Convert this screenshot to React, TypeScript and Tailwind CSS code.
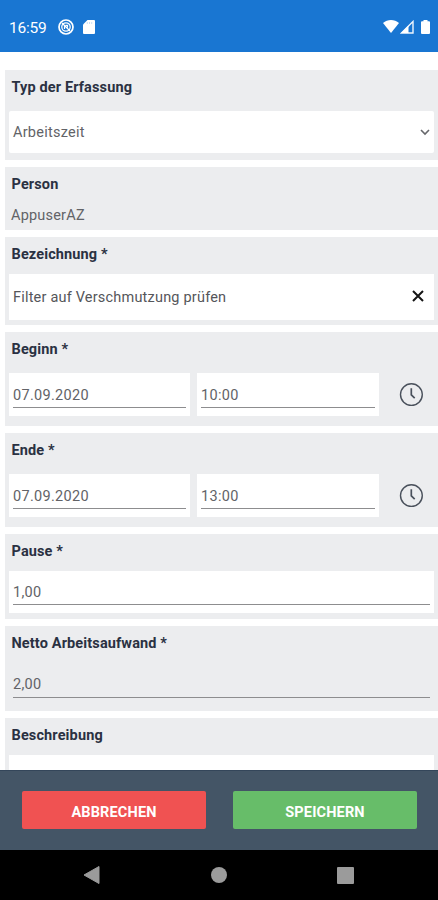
import type { ReactNode } from 'react'

function Section({ label, className, children }: { label: string; className: string; children?: ReactNode }) {
  return (
    <section className={`shrink-0 bg-[#ecedef] pl-1 pr-1 ${className}`}>
      <h2 className="h-[37px] pt-[8px] pl-[2.5px] text-[14.5px] leading-[19px] font-bold tracking-[0.13px] text-[#2a3142]">{label}</h2>
      {children}
    </section>
  )
}

function Input({ value, className }: { value: string; className: string }) {
  return (
    <div className={`px-1 ${className}`}>
      <div className="h-full border-b border-[#8d8d8f] text-[14.5px] leading-[18px] tracking-[0.3px] text-[#626367]">{value}</div>
    </div>
  )
}

function ClockIcon() {
  return (
    <svg className="ml-[20px] mt-[9px] h-6 w-6" viewBox="0 0 24 24" fill="none" stroke="#4a515c">
      <circle cx="12.4" cy="12.6" r="10.9" strokeWidth="1.4" />
      <path d="M12.3 6.2v6.6l3.400 3.400" strokeWidth="1.7" />
    </svg>
  )
}

function DateRow({ date, time }: { date: string; time: string }) {
  return (
    <div className="mt-[4px] flex">
      <Input value={date} className="h-[43px] w-[181px] bg-white pt-[14px] pb-[8px]" />
      <Input value={time} className="ml-[7px] h-[43px] w-[182px] bg-white pt-[14px] pb-[8px]" />
      <ClockIcon />
    </div>
  )
}

function StatusBar() {
  return (
    <header className="flex h-[52px] shrink-0 items-center bg-[#1976d2] pl-[9px] pr-[8px] text-white">
      <span className="mt-[3px] w-[38px] text-[15.5px] leading-5 tracking-[-0.25px]">16:59</span>
      <svg className="ml-[11px] mt-[2px] h-4 w-4" viewBox="0 0 16 16" fill="none" stroke="white">
        <circle cx="8" cy="8" r="7" strokeWidth="1.7" />
        <circle cx="8" cy="8" r="4.2" strokeWidth="1.3" />
        <path d="M4 4l8 8M6.500 10V7.200M9.500 8.500V6.300H7.500" strokeWidth="1.2" />
      </svg>
      <svg className="ml-[9px] mt-[2px] h-[14px] w-3" viewBox="0 0 12 14" fill="white">
        <path d="M4.5 0H11a1 1 0 0 1 1 1v12a1 1 0 0 1-1 1H1a1 1 0 0 1-1-1V4.5z" />
        <path d="M4.3 2v2M6.5 2v2M8.7 2v2" stroke="#b9d5f2" strokeWidth=".8" />
      </svg>
      <svg className="ml-auto mt-[1px] h-[13px] w-4" viewBox="0 0 16 13" fill="white">
        <path d="M0 3C4.5-1 11.5-1 16 3L8 13z" />
      </svg>
      <svg className="ml-[1px] mt-[2px] h-[14px] w-[14px]" viewBox="0 0 14 14" fill="none">
        <path d="M13 1.5V13H1.5z" stroke="#eef5fd" strokeWidth="1.400" />
        <path d="M8.5 5.5V13H1z" fill="white" />
      </svg>
      <svg className="ml-[7px] mt-[2px] h-[14px] w-[9px]" viewBox="0 0 9 14" fill="white">
        <path d="M2.500 0h4v1.3h1.500a1 1 0 0 1 1 1V13a1 1 0 0 1-1 1H1a1 1 0 0 1-1-1V2.300a1 1 0 0 1 1-1h1.500z" />
      </svg>
    </header>
  )
}

export default function App() {
  return (
    <div className="flex h-[900px] w-full flex-col overflow-hidden bg-white font-['Roboto','Liberation_Sans',sans-serif]">
      <StatusBar />
      <main className="flex h-[718px] shrink-0 flex-col gap-[7px] overflow-hidden pt-[18px] pl-[5px]">
        <Section label="Typ der Erfassung" className="h-[90px]">
          <div className="mt-[4px] flex h-[42px] items-center justify-between rounded-[2px] bg-white pl-1 pr-[4px] text-[14.5px] tracking-[0.25px] text-[#626367]">
            <span className="pt-[2px]">Arbeitszeit</span>
            <svg className="h-[10px] w-[10px]" viewBox="0 0 10 10" fill="none" stroke="#66676b" strokeWidth="1.6">
              <path d="M1 3l4 4 4-4" />
            </svg>
          </div>
        </Section>
        <Section label="Person" className="h-[63px]">
          <p className="pl-[2px] pt-[3px] text-[14.5px] leading-[18px] tracking-[0.2px] text-[#626367]">AppuserAZ</p>
        </Section>
        <Section label="Bezeichnung *" className="h-[88px]">
          <div className="flex h-[46px] items-center justify-between bg-white pl-1 pr-[10px] text-[14.5px] tracking-[0.2px] text-[#55565a]">
            <span className="pt-[2px]">Filter auf Verschmutzung prüfen</span>
            <svg className="-mt-[2px] h-3 w-3" viewBox="0 0 12 12" fill="none" stroke="#151515" strokeWidth="2">
              <path d="M1 1l10 10M11 1L1 11" />
            </svg>
          </div>
        </Section>
        <Section label="Beginn *" className="h-[94px]">
          <DateRow date="07.09.2020" time="10:00" />
        </Section>
        <Section label="Ende *" className="h-[94px]">
          <DateRow date="07.09.2020" time="13:00" />
        </Section>
        <Section label="Pause *" className="h-[85px]">
          <Input value="1,00" className="h-[42px] bg-white pt-[13px] pb-[8px]" />
        </Section>
        <Section label="Netto Arbeitsaufwand *" className="h-[85px]">
          <Input value="2,00" className="h-[42px] pt-[13px] pb-[7px]" />
        </Section>
        <Section label="Beschreibung" className="h-[90px]">
          <div className="h-[50px] bg-white" />
        </Section>
      </main>
      <footer className="flex h-[80px] shrink-0 justify-between border-t border-[#34465a] bg-[#445566] pt-[20px] pl-[22px] pr-[21px] text-[14.5px] font-bold tracking-[0.15px] text-white">
        <button className="h-[38px] w-[184px] rounded-[2px] bg-[#f05252] pt-[6px]">ABBRECHEN</button>
        <button className="h-[38px] w-[184px] rounded-[2px] bg-[#67bd69] pt-[6px]">SPEICHERN</button>
      </footer>
      <nav className="flex h-[50px] shrink-0 items-center bg-black pl-[83px]">
        <svg className="h-[18px] w-[17px]" viewBox="0 0 17 18" fill="#9b9b9b">
          <path d="M1 9L16 .500v17z" stroke="#9b9b9b" strokeLinejoin="round" />
        </svg>
        <div className="ml-[111px] h-4 w-4 rounded-full bg-[#9b9b9b]" />
        <div className="ml-[110px] h-[17px] w-[17px] rounded-[1px] bg-[#9b9b9b]" />
      </nav>
    </div>
  )
}
